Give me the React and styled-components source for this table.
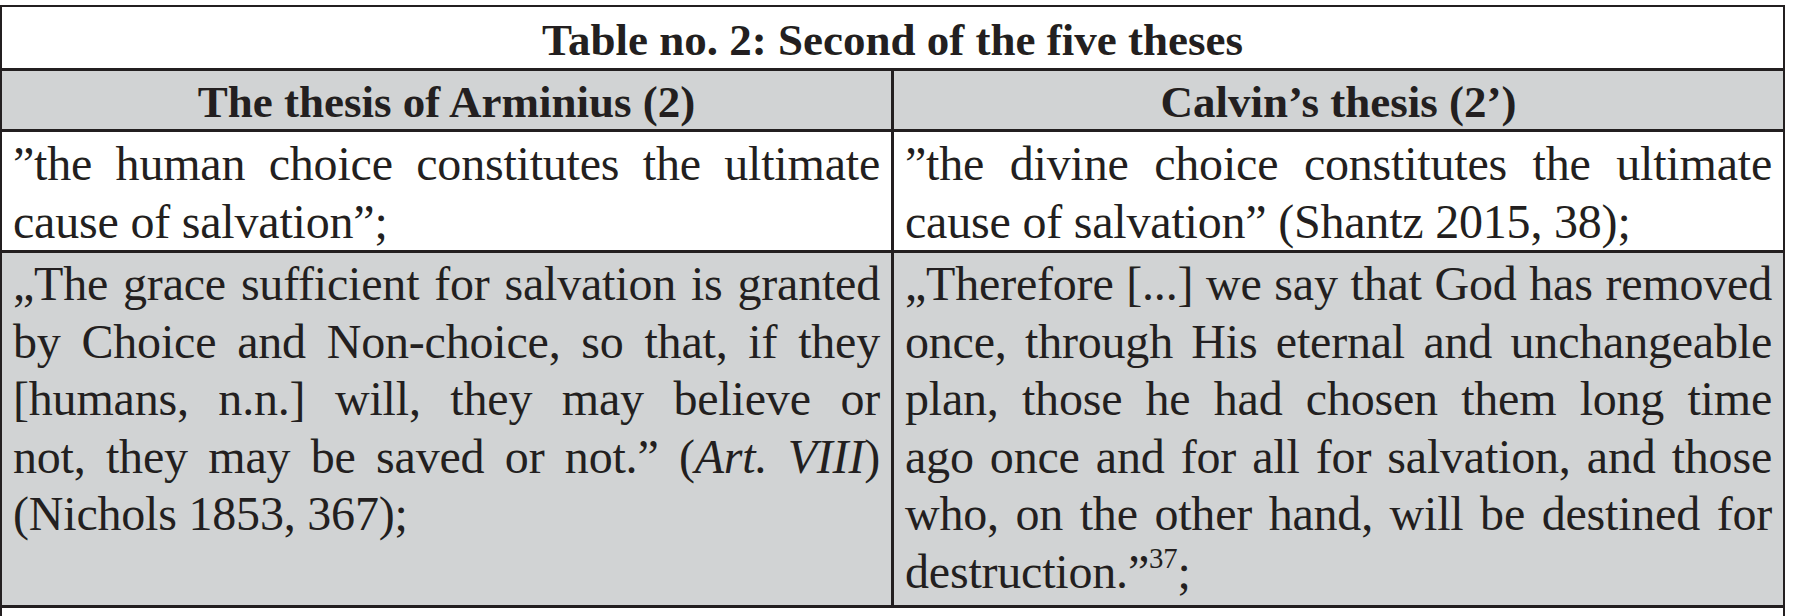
import React from "react";
import styled, { createGlobalStyle } from "styled-components";

const ink = "#231f20";
const shade = "#d1d3d4";

const GlobalStyle = createGlobalStyle`
  html, body {
    margin: 0;
    padding: 0;
    background: #ffffff;
    overflow: hidden;
  }
`;

const Page = styled.div`
  padding-top: 5px;
  width: 1795px;
`;

const Table = styled.div`
  display: grid;
  grid-template-columns: 1fr 1fr;
  gap: 3px;
  width: 1785px;
  box-sizing: border-box;
  padding: 2px;
  background: ${ink};
  color: ${ink};
  font-family: "Liberation Serif", "Times New Roman", serif;
`;

const TitleCell = styled.div`
  grid-column: 1 / -1;
  background: #ffffff;
  padding-top: 6px;
  height: 61px;
  box-sizing: border-box;
  line-height: 55px;
  font-size: 45px;
  font-weight: bold;
  text-align: center;
`;

const HeadCell = styled.div`
  background: ${shade};
  padding-top: 6px;
  height: 58px;
  box-sizing: border-box;
  line-height: 50px;
  font-size: 45px;
  font-weight: bold;
  text-align: center;
`;

const Cell = styled.div`
  background: ${(p) => (p.$shaded ? shade : "#ffffff")};
  padding: ${(p) => (p.$shaded ? "2px 11px 5px" : "3px 11px 0")};
  font-size: 48px;
  line-height: 57.5px;
  letter-spacing: -0.2px;
`;

const Line = styled.span`
  display: block;
  text-align: justify;
  text-align-last: ${(p) => (p.$last ? "left" : "justify")};
`;

const Sup = styled.sup`
  font-size: 0.6em;
  line-height: 0;
  vertical-align: 0.7em;
`;

const TailCell = styled.div`
  grid-column: 1 / -1;
  background: #ffffff;
  height: 40px;
`;

const rows = [
  {
    shaded: false,
    left: ["”the human choice constitutes the ultimate", "cause of salvation”;"],
    right: [
      "”the divine choice constitutes the ultimate",
      "cause of salvation” (Shantz 2015, 38);",
    ],
  },
  {
    shaded: true,
    left: [
      "„The grace sufficient for salvation is granted",
      "by Choice and Non-choice, so that, if they",
      "[humans, n.n.] will, they may believe or",
      <>
        not, they may be saved or not.” (<i>Art. VIII</i>)
      </>,
      "(Nichols 1853, 367);",
    ],
    right: [
      "„Therefore [...] we say that God has removed",
      "once, through His eternal and unchangeable",
      "plan, those he had chosen them long time",
      "ago once and for all for salvation, and those",
      "who, on the other hand, will be destined for",
      <>
        destruction.”<Sup>37</Sup>;
      </>,
    ],
  },
];

const App = () => {
  return (
    <Page>
      <GlobalStyle />
      <Table>
        <TitleCell>Table no. 2: Second of the five theses</TitleCell>
        <HeadCell>The thesis of Arminius (2)</HeadCell>
        <HeadCell>Calvin’s thesis (2’)</HeadCell>
        {rows.map((row, i) =>
          [row.left, row.right].map((lines, j) => (
            <Cell key={`${i}-${j}`} $shaded={row.shaded}>
              {lines.map((line, k) => (
                <Line key={k} $last={k === lines.length - 1}>
                  {line}
                </Line>
              ))}
            </Cell>
          ))
        )}
        <TailCell />
      </Table>
    </Page>
  );
};

export default App;
